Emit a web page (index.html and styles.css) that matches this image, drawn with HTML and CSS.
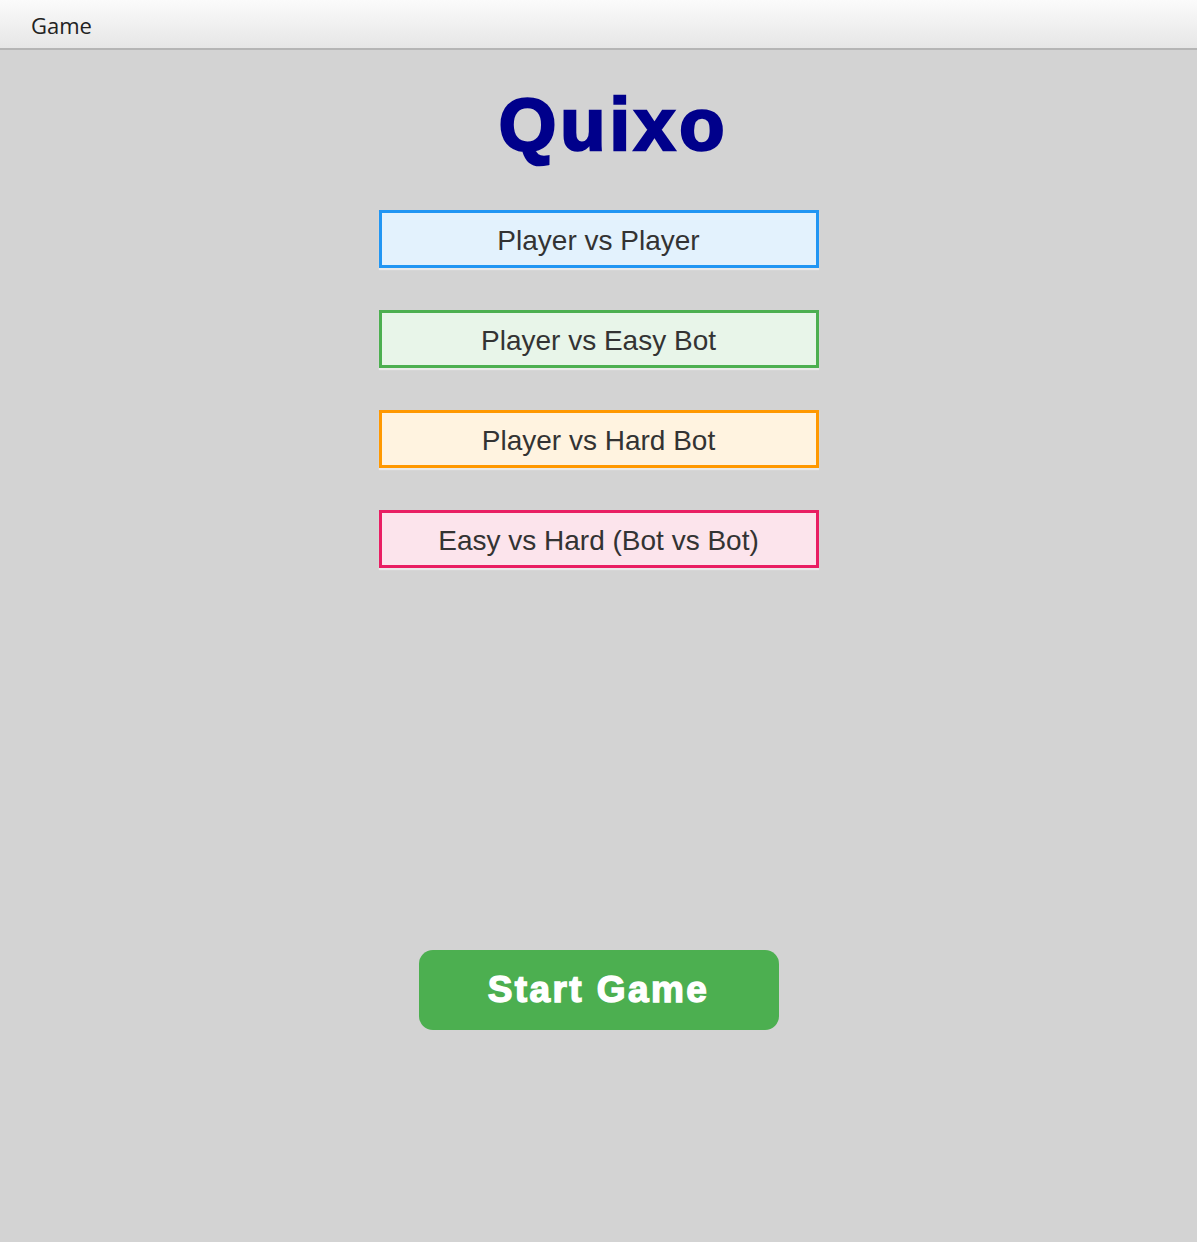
FILE: index.html
```html
<!DOCTYPE html>
<html>
<head>
<meta charset="utf-8">
<title>Quixo</title>
<link rel="stylesheet" href="styles.css">
</head>
<body>
<div class="menubar"><span class="menu-item">Game</span></div>
<main class="main">
  <h1 class="title">Quixo</h1>
  <div class="modes">
    <button class="mode mode-blue">Player vs Player</button>
    <button class="mode mode-green">Player vs Easy Bot</button>
    <button class="mode mode-orange">Player vs Hard Bot</button>
    <button class="mode mode-pink">Easy vs Hard (Bot vs Bot)</button>
  </div>
  <button class="start">Start Game</button>
</main>
</body>
</html>
```
FILE: styles.css
```css
html, body {
  margin: 0;
  padding: 0;
  background: #d3d3d3;
  height: 100%;
}
.menubar {
  height: 48px;
  border-bottom: 2px solid #b5b5b5;
  background: linear-gradient(to bottom, #fbfbfb, #e6e6e6);
  display: flex;
  align-items: center;
}
.menu-item {
  font-family: "Open Sans", "Noto Sans", sans-serif;
  font-size: 22px;
  color: #222;
  margin-left: 31px;
  line-height: 1;
  padding-top: 2px;
}
.main {
  display: flex;
  flex-direction: column;
  align-items: center;
}
.title {
  margin: 38px 0 0 0;
  font-family: "Liberation Sans", Arial, sans-serif;
  font-weight: 900;
  font-size: 74px;
  line-height: 74px;
  letter-spacing: 4px;
  color: #00008b;
  -webkit-text-stroke: 2.6px #00008b;
  padding-left: 30px;
}
.modes {
  margin-top: 48px;
  display: flex;
  flex-direction: column;
  gap: 42px;
}
.mode {
  width: 440px;
  height: 58px;
  box-sizing: border-box;
  border: 3px solid;
  margin: 0;
  padding: 3px 0 0 0;
  font-family: "Liberation Sans", Arial, sans-serif;
  font-size: 28px;
  color: #333;
  box-shadow: 0 2px 1px rgba(255, 255, 255, 0.5);
}
.mode-blue { border-color: #2196f3; background: #e3f2fd; }
.mode-green { border-color: #4caf50; background: #e8f5e9; }
.mode-orange { border-color: #ff9800; background: #fff3e0; }
.mode-pink { border-color: #e91e63; background: #fce4ec; }
.start {
  margin-top: 382px;
  width: 360px;
  height: 80px;
  border: none;
  border-radius: 14px;
  background: #4caf50;
  color: #fff;
  font-family: "Liberation Sans", Arial, sans-serif;
  font-weight: 900;
  font-size: 37px;
  letter-spacing: 2.4px;
  -webkit-text-stroke: 1.4px #fff;
  padding: 0;
}
```
